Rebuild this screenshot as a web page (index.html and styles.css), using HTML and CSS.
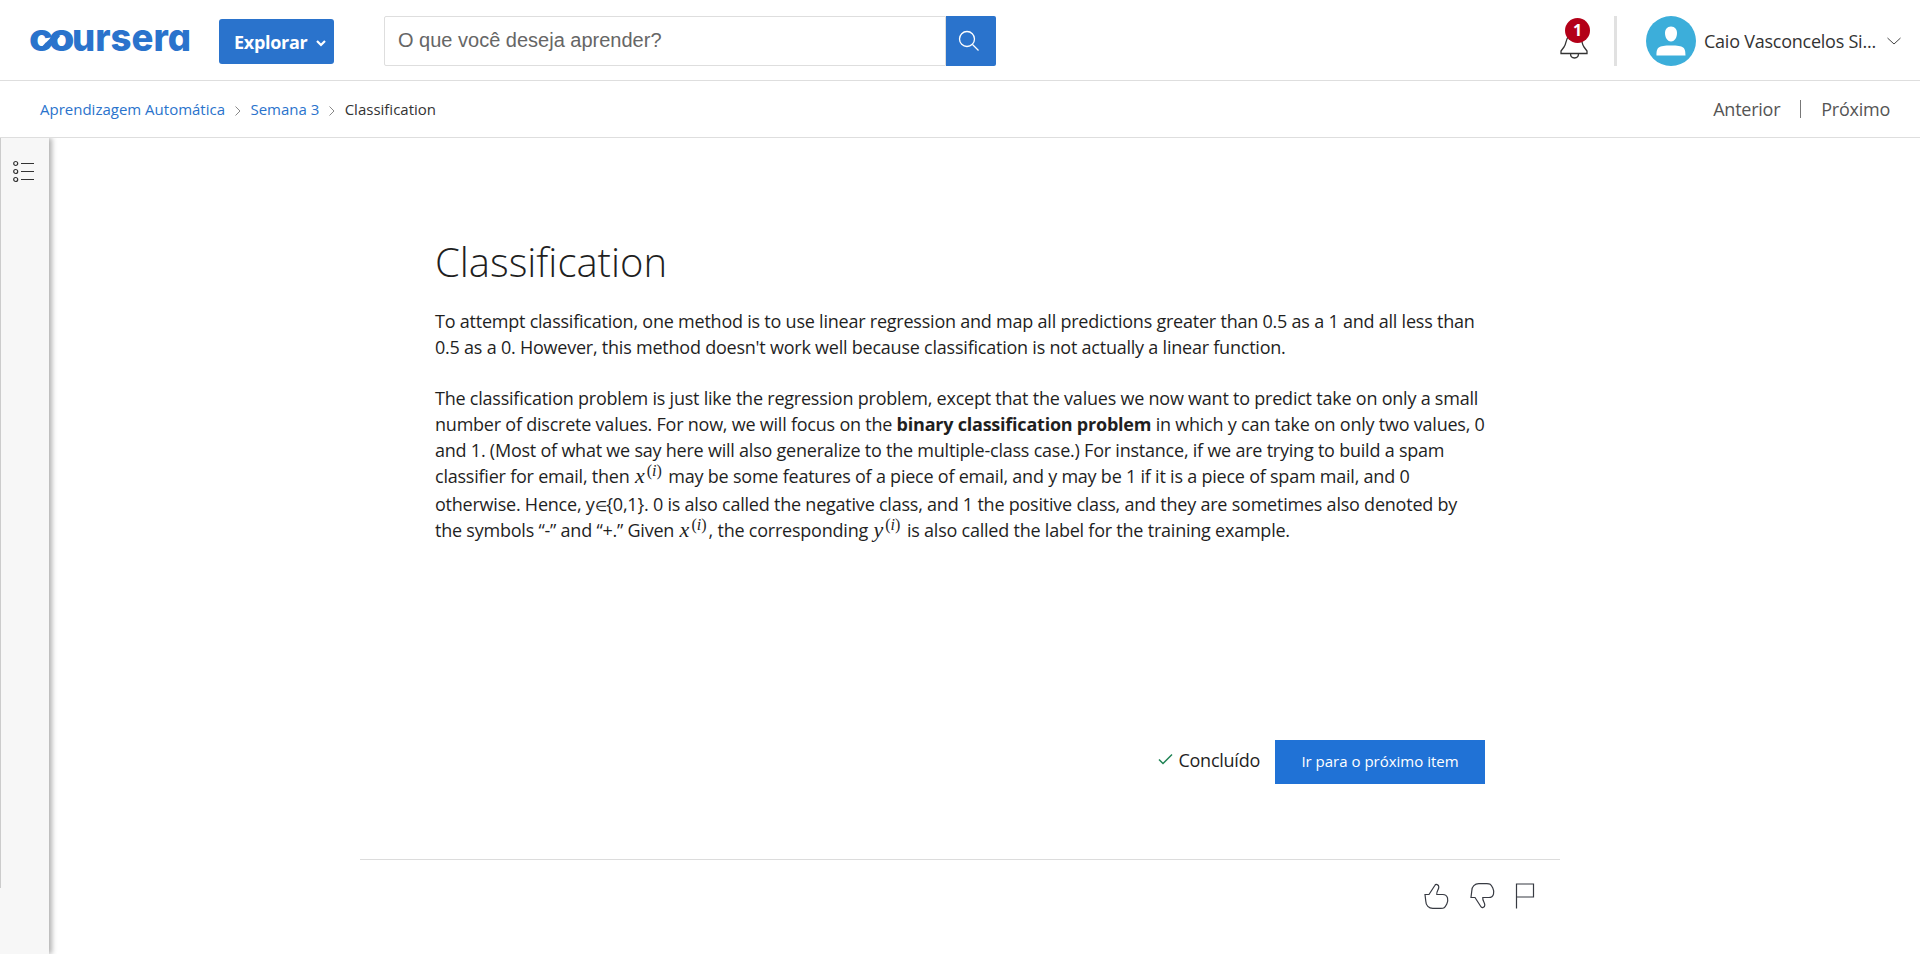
FILE: index.html
```html
<!DOCTYPE html>
<html lang="pt-BR">
<head>
<meta charset="utf-8">
<title>Classification | Coursera</title>
<link rel="stylesheet" href="styles.css">
</head>
<body>
<header class="header">
  <a class="logo"><svg width="180" height="60" viewBox="-5 -9 180 60">
    <g class="logo-text"><text x="-1" y="25.500" textLength="24" lengthAdjust="spacingAndGlyphs">c</text><text x="18.500" y="25.500" textLength="26" lengthAdjust="spacingAndGlyphs">o</text><text x="42" y="25.500" textLength="119" lengthAdjust="spacingAndGlyphs">ursera</text></g>
    <path d="M14.500 23 L28 9.500" stroke="#2a73cc" stroke-width="5.5"/>
  </svg></a>
  <button class="explore">Explorar<svg width="12" height="8" viewBox="0 0 12 8"><path d="M2 2l4 4 4-4" fill="none" stroke="#fff" stroke-width="2.2"/></svg></button>
  <div class="search"><div class="field">O que você deseja aprender?</div><button class="go"><svg width="22" height="22" viewBox="0 0 22 22" fill="none" stroke="#fff" stroke-width="1.3"><circle cx="9" cy="9" r="7.5"/><path d="M14.5 14.5l6 6"/></svg></button></div>
  <div class="account">
    <div class="bell"><svg width="30" height="34" viewBox="0 0 30 34" fill="none" stroke="#333" stroke-width="1.3"><path d="M1 28.5v-2.500l3-4c2.500-3 1.500-8 5-11 2-2 8-2 10 0 3.500 3 2.500 8 5 11l3 4v2.500zM10.500 28.500c0 6 8 6 8 0"/></svg><span class="badge">1</span></div>
    <span class="divider"></span>
    <svg class="avatar" width="50" height="50" viewBox="0 0 50 50"><circle cx="25" cy="25" r="25" fill="#3caeda"/><path d="M25 10.500c4 0 6 3 6 6.500 0 4-2 8.500-6 8.500s-6-4.500-6-8.500c0-3.500 2-6.500 6-6.500zM10.500 39.500c0-8 1.500-10 14.500-10s14.500 2 14.500 10z" fill="#fff"/></svg>
    <span class="name">Caio Vasconcelos Si...</span>
    <svg class="caret" width="14" height="8" viewBox="0 0 14 8"><path d="M.5 1l6.500 6 6.500-6" fill="none" stroke="#444"/></svg>
  </div>
</header>
<nav class="crumbs">
  <a>Aprendizagem Automática</a><svg width="6" height="10" viewBox="0 0 6 10"><path d="M.5.500l4.500 4.500-4.500 4.500" fill="none" stroke="#888"/></svg><a>Semana 3</a><svg width="6" height="10" viewBox="0 0 6 10"><path d="M.5.500l4.500 4.500-4.500 4.500" fill="none" stroke="#888"/></svg><span>Classification</span>
  <div class="pager"><span>Anterior</span><i></i><span>Próximo</span></div>
</nav>
<div class="body">
  <aside class="rail"><svg width="22" height="22" viewBox="0 0 22 22" fill="none" stroke="#333" stroke-width="1.2"><circle cx="2.700" cy="3.500" r="2"/><circle cx="2.700" cy="11.500" r="2"/><circle cx="2.700" cy="19.500" r="2"/><path d="M8 3.500h13M8 11.500h13M8 19.500h13"/></svg></aside>
  <main class="page">
    <article class="reading">
      <h1>Classification</h1>
      <p>To attempt classification, one method is to use linear regression and map all predictions greater than 0.5 as a 1 and all less than<br>0.5 as a 0. However, this method doesn't work well because classification is not actually a linear function.</p>
      <p>The classification problem is just like the regression problem, except that the values we now want to predict take on only a small<br>number of discrete values. For now, we will focus on the <b>binary classification problem</b> in which y can take on only two values, 0<br>and 1. (Most of what we say here will also generalize to the multiple-class case.) For instance, if we are trying to build a spam<br>classifier for email, then <span class="math">x<sup>(<em>i</em>)</sup></span> may be some features of a piece of email, and y may be 1 if it is a piece of spam mail, and 0<span class="after-math">otherwise. Hence, y<small>∈</small>{0,1}. 0 is also called the negative class, and 1 the positive class, and they are sometimes also denoted by<br>the symbols “-” and “+.” Given <span class="math">x<sup>(<em>i</em>)</sup></span>, the corresponding <span class="math">y<sup>(<em>i</em>)</sup></span> is also called the label for the training example.</span></p>
    </article>
    <div class="finish"><svg width="15" height="12" viewBox="0 0 15 12"><path d="M1 6.500l4 4L14 1.500" fill="none" stroke="#1f8354" stroke-width="1.5"/></svg><span>Concluído</span><button class="next">Ir para o próximo item</button></div>
    <footer class="feedback">
      <svg width="24" height="26" viewBox="0 0 24 26"><path id="thumb" d="M1 11.500h4L10.800 2.500c1-2 4-1 4 1.500 0 3-2.500 4-2 7.500h6c5.500 0 5.700 6 4 9.500-2 4-3 4.300-6 4.300h-8c-4 0-7-3-7-7z" fill="none" stroke="#373a42" stroke-width="1.200"/></svg>
      <svg width="24" height="26" viewBox="0 0 24 26"><use href="#thumb" transform="matrix(1 0 0 -1 0 26)"/></svg>
      <svg width="20" height="26" viewBox="0 0 20 26"><path d="M.5 25.500V1h17v13H.5" fill="none" stroke="#373a42" stroke-width="1.200"/></svg>
    </footer>
  </main>
</div>
</body>
</html>
```
FILE: styles.css
```css
* { box-sizing: border-box; }
body { margin: 0; height: 954px; overflow: hidden; display: flex; flex-direction: column; background: #fff; color: #1f1f1f; font-family: "Open Sans", sans-serif; }
button { border: 0; padding: 0; font-family: inherit; color: #fff; background: #2a73cc; }
svg { display: block; flex: none; overflow: visible; }
.header { height: 81px; flex: none; display: flex; align-items: flex-start; border-bottom: 1px solid #dedede; padding: 16px 19px 0 25px; }
.logo { width: 194px; }
.logo-text { font: 800 38px Inter, sans-serif; font-feature-settings: "cv11"; fill: #2a73cc; }
.explore { width: 115px; height: 45px; margin: 3px 50px 0 0; padding: 0 7px 0 15px; border-radius: 3px; display: flex; align-items: center; justify-content: space-between; font-size: 18px; font-weight: 700; letter-spacing: -.3px; }
.explore svg { margin-top: 3px; }
.search { width: 612px; height: 50px; display: flex; }
.field { flex: 1; border: 1px solid #dedede; border-radius: 2px 0 0 2px; padding: 0 13px; font: 20px/47px "Liberation Sans", sans-serif; color: #666; }
.go { width: 50px; border-radius: 0 2px 2px 0; display: flex; align-items: center; justify-content: center; padding-right: 4px; }
.account { margin-left: auto; display: flex; align-items: center; height: 50px; }
.bell { width: 54px; position: relative; padding-top: 1px; }
.badge { position: absolute; left: 5px; top: -6px; width: 25px; height: 25px; border-radius: 50%; background: #b30018; color: #fff; text-align: center; font-size: 16px; font-weight: 700; line-height: 25px; }
.divider { width: 3px; height: 50px; background: #e1e1e1; margin-right: 29px; }
.name { width: 191px; padding-left: 8px; font-size: 18px; letter-spacing: -.24px; color: #333; white-space: nowrap; }
.crumbs { height: 57px; flex: none; display: flex; align-items: center; padding: 0 30px 0 40px; border-bottom: 1px solid #dedede; font-size: 15px; color: #333; gap: 9.7px; }
.crumbs > svg { margin-top: 3px; }
.crumbs a { color: #2a73cc; }
.pager { margin-left: auto; display: flex; align-items: center; gap: 20px; font-size: 18px; letter-spacing: -.25px; color: #555; }
.pager i { width: 1px; height: 18px; background: #777; }
.body { flex: 1; display: flex; min-height: 0; }
.rail { width: 49px; background: linear-gradient(#ccc, #ccc) 0 0 / 1px 750px no-repeat #f7f7f7; box-shadow: 3px 0 5px rgba(0,0,0,.3); padding: 22px 0 0 13px; clip-path: inset(0 -12px 0 0); }
.page { flex: 1; display: flex; flex-direction: column; padding-left: 311px; }
.reading { margin: 94px 0 0 75px; height: 508px; width: 1060px; white-space: nowrap; }
h1 { margin: 0 0 16px; font-size: 40px; line-height: 60px; font-weight: 300; }
p { margin: 0 0 25px; font-size: 18px; line-height: 26px; letter-spacing: -.225px; }
p small { font-size: 14px; line-height: 0; }
.after-math { display: block; margin-top: 2px; }
.math { display: inline-block; width: 30px; height: 20px; padding-left: 1px; white-space: nowrap; letter-spacing: 0; font: italic 22px/20px "Liberation Serif", serif; }
.math sup { font-size: 16px; line-height: 0; vertical-align: 7px; font-style: normal; margin-left: 2px; }
.finish { width: 1125px; height: 44px; display: flex; align-items: center; justify-content: flex-end; font-size: 18px; letter-spacing: -.25px; }
.finish svg { margin-bottom: 6px; }
.finish span { margin: 0 15px 4px 5px; }
.next { width: 210px; height: 44px; padding-bottom: 2px; font-size: 15px; background: #2072d6; }
.feedback { width: 1200px; margin-top: 75px; border-top: 1px solid #dcdcdc; display: flex; justify-content: flex-end; padding: 23px 24px 0 0; gap: 22px; }
```
